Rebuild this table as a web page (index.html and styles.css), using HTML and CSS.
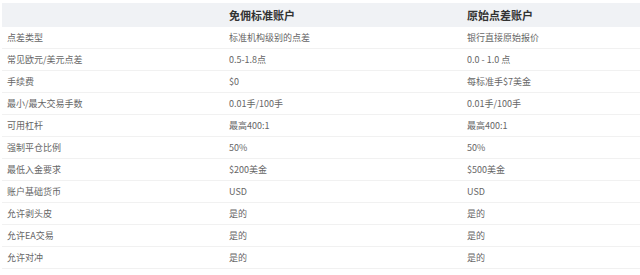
FILE: index.html
```html
<!DOCTYPE html>
<html lang="zh-CN">
<head>
<meta charset="utf-8">
<link rel="stylesheet" href="styles.css">
</head>
<body>
<div class="table">
  <div class="row head"><div></div><div>免佣标准账户</div><div>原始点差账户</div></div>
  <div class="row"><div>点差类型</div><div>标准机构级别的点差</div><div>银行直接原始报价</div></div>
  <div class="row"><div>常见欧元/美元点差</div><div>0.5-1.8点</div><div>0.0 - 1.0 点</div></div>
  <div class="row"><div>手续费</div><div>$0</div><div>每标准手$7美金</div></div>
  <div class="row"><div>最小/最大交易手数</div><div>0.01手/100手</div><div>0.01手/100手</div></div>
  <div class="row"><div>可用杠杆</div><div>最高400:1</div><div>最高400:1</div></div>
  <div class="row"><div>强制平仓比例</div><div>50%</div><div>50%</div></div>
  <div class="row"><div>最低入金要求</div><div>$200美金</div><div>$500美金</div></div>
  <div class="row"><div>账户基础货币</div><div>USD</div><div>USD</div></div>
  <div class="row"><div>允许剥头皮</div><div>是的</div><div>是的</div></div>
  <div class="row"><div>允许EA交易</div><div>是的</div><div>是的</div></div>
  <div class="row"><div>允许对冲</div><div>是的</div><div>是的</div></div>
</div>
</body>
</html>
```
FILE: styles.css
```css
html, body {
  margin: 0;
  padding: 0;
  background: #fff;
}
body {
  font-family: "Noto Sans CJK SC", "Noto Sans", sans-serif;
  padding: 3px 0 0 2px;
}
.table {
  display: flex;
  flex-direction: column;
}
.row {
  display: grid;
  grid-template-columns: 222px 238px 1fr;
  height: 22px;
  align-items: center;
  border-bottom: 1px solid #f1f1f1;
  box-sizing: border-box;
  font-size: 9px;
  color: #666;
}
.row > div {
  padding-left: 5px;
  white-space: nowrap;
}
.row.head {
  height: 24px;
  background: #f0f2f5;
  border-bottom: none;
  font-size: 11px;
  font-weight: bold;
  color: #333;
}
.row.head + .row {
  height: 22px;
}
```
